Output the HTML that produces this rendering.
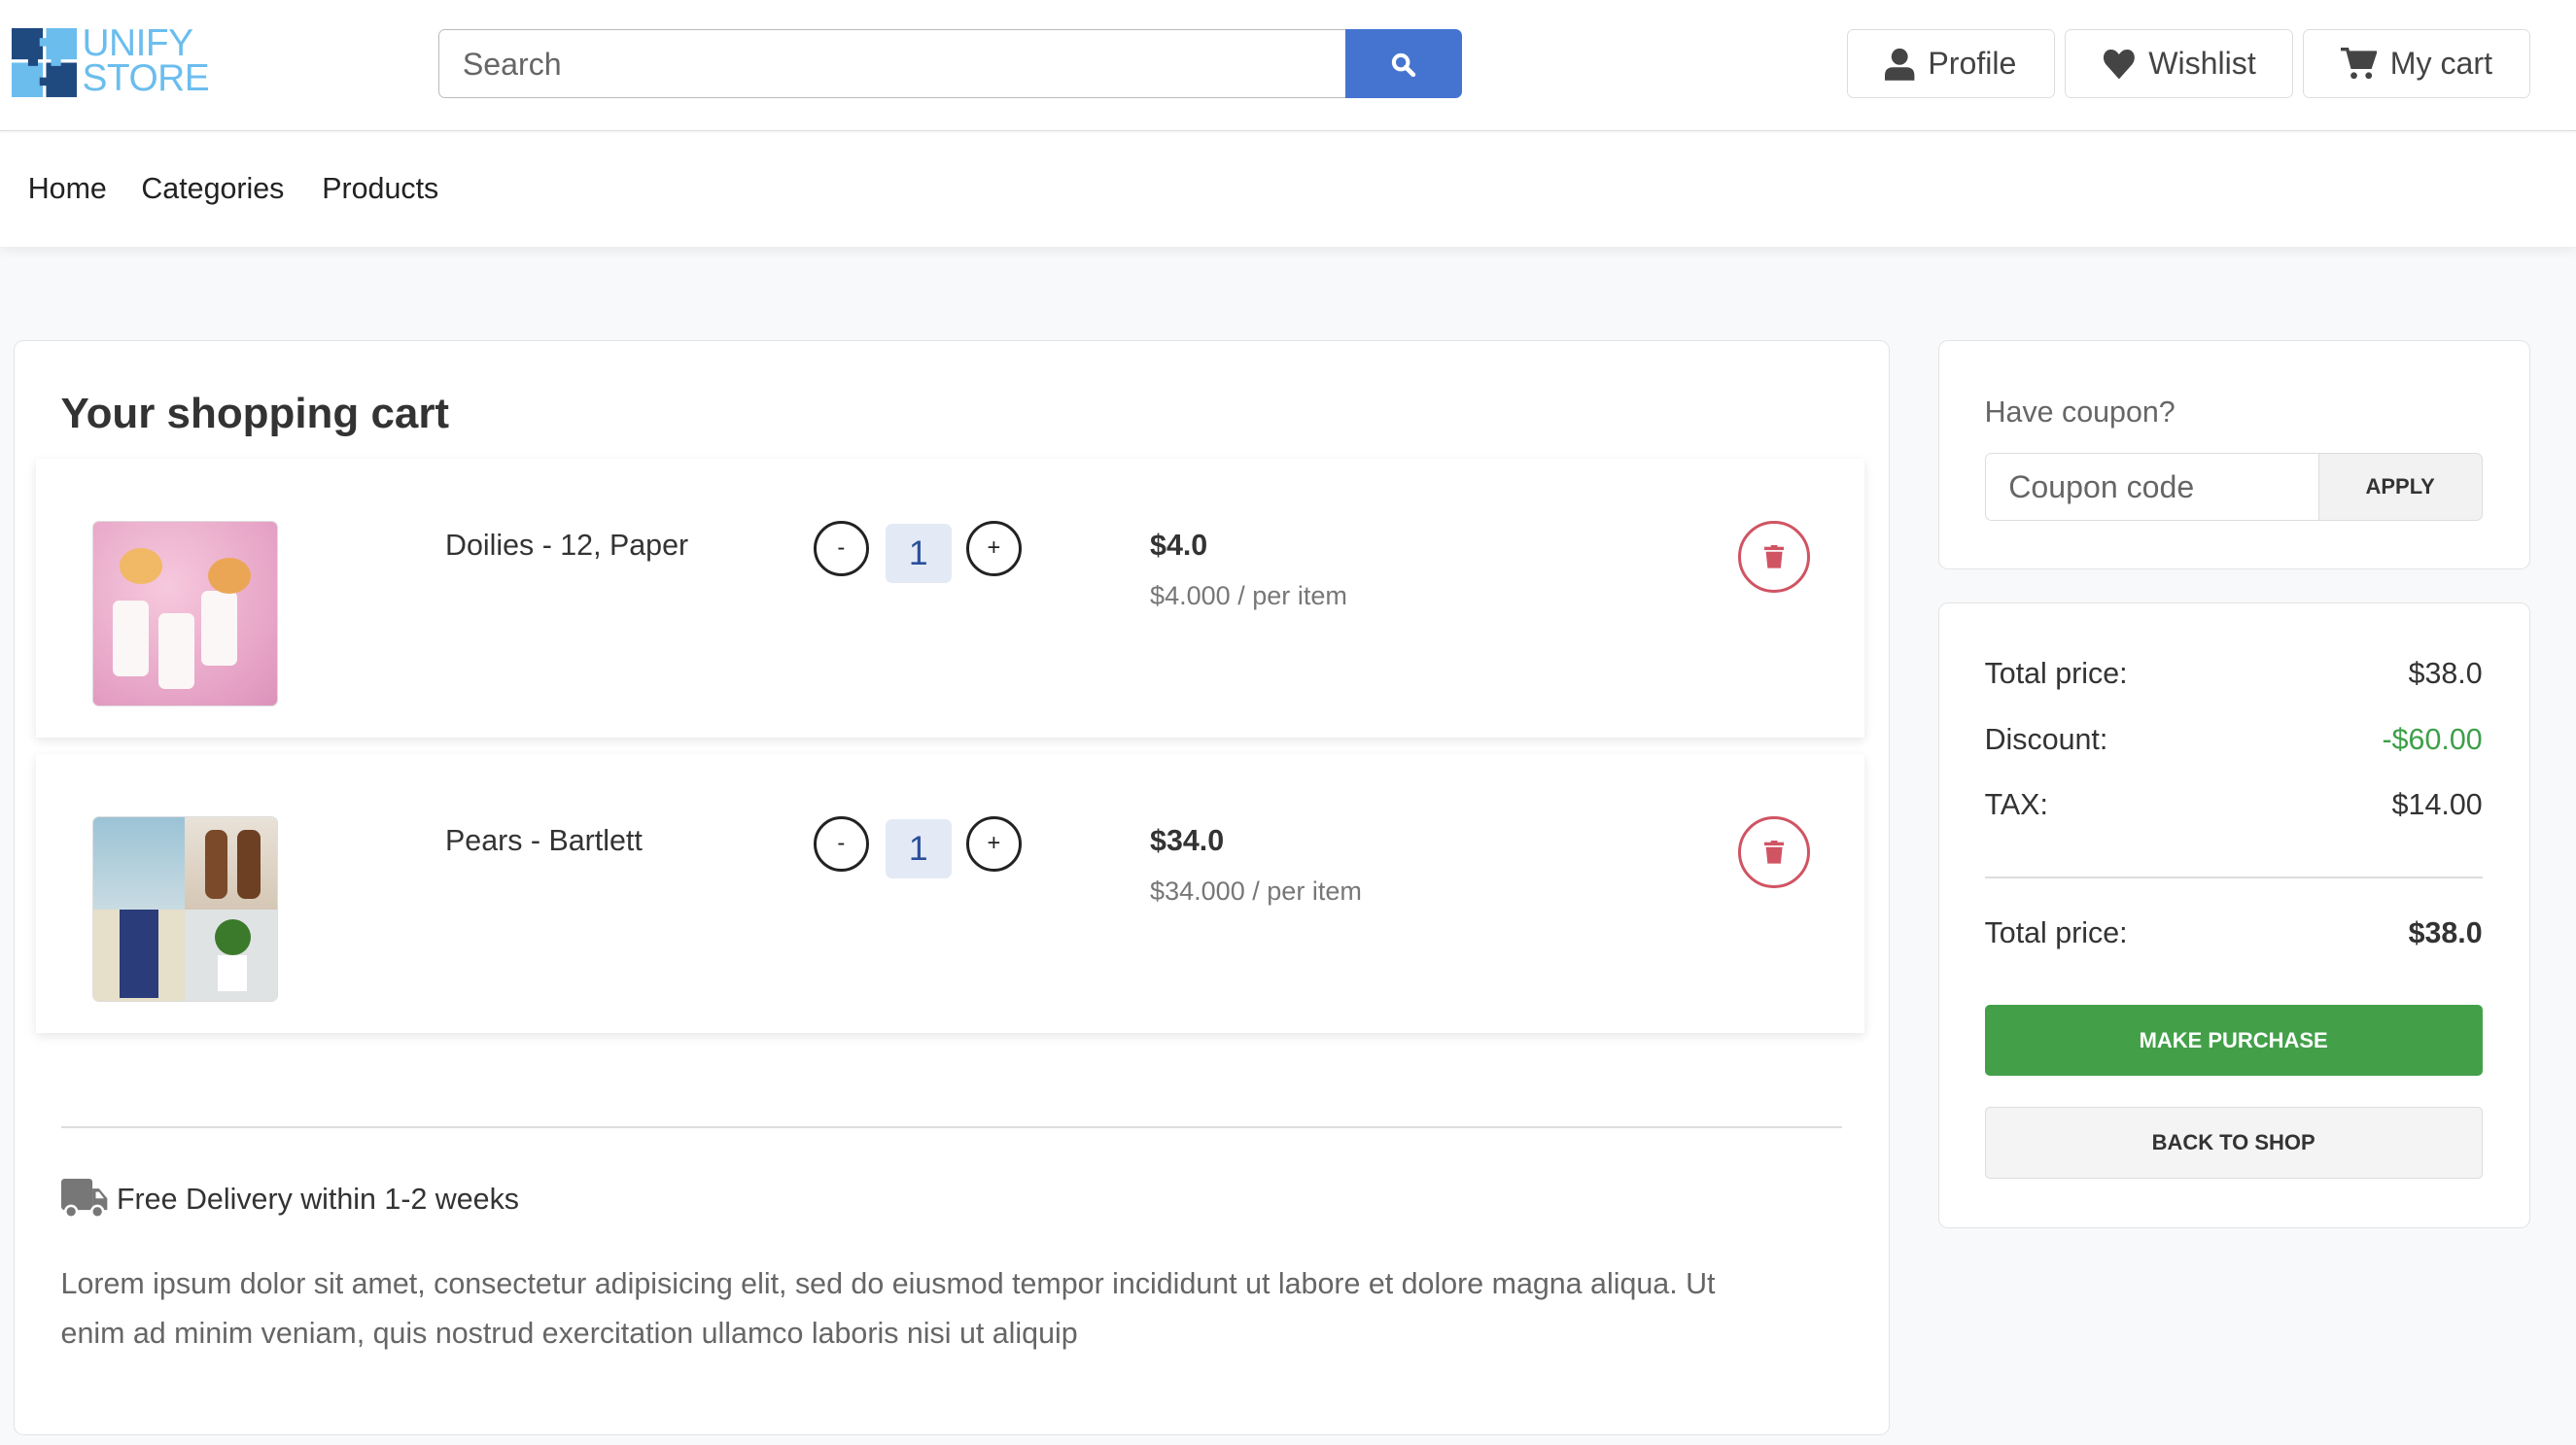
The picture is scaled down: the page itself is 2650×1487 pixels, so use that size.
<!DOCTYPE html>
<html><head><meta charset="utf-8"><style>
html{zoom:1.69005}
*{box-sizing:border-box;margin:0;padding:0}
body{width:1568px;height:880px;overflow:hidden;background:#f8f9fa;font-family:"Liberation Sans",sans-serif;color:#333;position:relative}
.a{position:absolute}
.hdr{left:0;top:0;width:1568px;height:80px;background:#fff;border-bottom:1px solid #dcdcdc}
.nav{left:0;top:81px;width:1568px;height:69px;background:#fff;box-shadow:0 3px 6px rgba(0,0,0,.06)}
.nav span{position:absolute;top:24px;font-size:18px;color:#222}
.btn{border:1px solid #ddd;border-radius:4px;background:#fff;height:42px;top:18px;font-size:19px;color:#444;display:flex;align-items:center;justify-content:center;gap:8px}
.card{background:#fff;border:1px solid #e3e3e3;border-radius:6px}
.row{left:22px;width:1113px;height:170px;background:#fff;box-shadow:0 2px 6px rgba(0,0,0,.1)}
.circ{width:34px;height:34px;border:2px solid #222;border-radius:50%;font-size:14px;display:flex;align-items:center;justify-content:center;color:#222}
.qty{width:40px;height:36px;background:#e3eaf6;border-radius:4px;color:#2b4f9a;font-size:21px;display:flex;align-items:center;justify-content:center}
.trash{width:44px;height:44px;border:2px solid #d05463;border-radius:50%;display:flex;align-items:center;justify-content:center}
.sm{font-size:18px;color:#333}
</style></head><body>
<div class="a hdr"></div>
<svg class="a" style="left:7px;top:17px" width="40" height="42" viewBox="0 0 40 42">
<rect x="0" y="0" width="19" height="19" fill="#1f4a80"/><rect x="21" y="0" width="19" height="19" fill="#6bbdee"/>
<rect x="0" y="21" width="19" height="21" fill="#6bbdee"/><rect x="21" y="21" width="19" height="21" fill="#1f4a80"/>
<rect x="17" y="6" width="6" height="5" fill="#6bbdee"/><rect x="10" y="17" width="6" height="6" fill="#1f4a80"/>
<rect x="24" y="17" width="6" height="6" fill="#6bbdee"/><rect x="17" y="30" width="6" height="5" fill="#1f4a80"/></svg>
<div class="a" style="left:50px;top:16px;font-size:23px;line-height:21px;color:#6bbdee;letter-spacing:-0.3px">UNIFY<br>STORE</div>
<div class="a" style="left:267px;top:18px;width:553px;height:42px;border:1px solid #bbb;border-right:0;border-radius:4px 0 0 4px;background:#fff;font-size:19px;color:#666;padding:10px 14px">Search</div>
<div class="a" style="left:819px;top:18px;width:71px;height:42px;background:#4574d0;border-radius:0 4px 4px 0"><svg style="position:absolute;left:28px;top:14px" width="15" height="15" viewBox="0 0 15 15"><circle cx="6" cy="6" r="4.3" fill="none" stroke="#fff" stroke-width="2.4"/><path d="M9 9l4.5 4.5" stroke="#fff" stroke-width="2.8" stroke-linecap="round"/></svg></div>
<div class="a btn" style="left:1124px;width:127px"><svg width="18" height="20" viewBox="0 0 18 20"><circle cx="9" cy="5.5" r="5" fill="#444"/><path d="M0 20v-3q0-5 5-5h8q5 0 5 5v3z" fill="#444"/></svg>Profile</div>
<div class="a btn" style="left:1257px;width:139px"><svg width="20" height="18" viewBox="0 0 20 18"><path d="M10 18L2 9C-1 5 1 0 5 0c2.5 0 4 1.5 5 3 1-1.5 2.5-3 5-3 4 0 6 5 3 9z" fill="#444"/></svg>Wishlist</div>
<div class="a btn" style="left:1402px;width:138px"><svg width="22" height="20" viewBox="0 0 22 20"><path d="M0 1h4l3 11h11l3-9H5" fill="none" stroke="#444" stroke-width="2"/><path d="M5 3h16l-3 9H7z" fill="#444"/><circle cx="8" cy="17" r="2" fill="#444"/><circle cx="17" cy="17" r="2" fill="#444"/></svg>My cart</div>
<div class="a nav"><span style="left:17px">Home</span><span style="left:86px">Categories</span><span style="left:196px">Products</span></div>

<div class="a card" style="left:8px;top:207px;width:1142px;height:667px"></div>
<div class="a" style="left:37px;top:237px;font-size:26px;font-weight:bold;color:#333">Your shopping cart</div>

<div class="a row" style="top:279px"></div>
<div class="a" style="left:56px;top:317px;width:113px;height:113px;border-radius:4px;border:1px solid #ddd;background:radial-gradient(circle at 40% 35%,#f6c9dd,#e6a3c6 70%,#dc92bb)">
<div class="a" style="left:12px;top:48px;width:22px;height:46px;background:#fbf7f6;border-radius:4px"></div>
<div class="a" style="left:40px;top:56px;width:22px;height:46px;background:#fbf7f6;border-radius:4px"></div>
<div class="a" style="left:66px;top:42px;width:22px;height:46px;background:#fbf7f6;border-radius:4px"></div>
<div class="a" style="left:16px;top:16px;width:26px;height:22px;background:#f1b865;border-radius:50%"></div>
<div class="a" style="left:70px;top:22px;width:26px;height:22px;background:#eba655;border-radius:50%"></div>
</div>
<div class="a sm" style="left:271px;top:322px">Doilies - 12, Paper</div>
<div class="a circ" style="left:495px;top:317px">-</div>
<div class="a qty" style="left:539px;top:319px">1</div>
<div class="a circ" style="left:588px;top:317px">+</div>
<div class="a" style="left:700px;top:322px;font-size:18px;font-weight:bold;color:#333">$4.0</div>
<div class="a" style="left:700px;top:354px;font-size:16px;color:#777">$4.000 / per item</div>
<div class="a trash" style="left:1058px;top:317px"><svg width="12" height="14" viewBox="0 0 12 14"><rect x="0" y="1" width="12" height="2" fill="#d05463"/><rect x="4" y="0" width="4" height="2" fill="#d05463"/><path d="M1 4h10l-1 10H2z" fill="#d05463"/></svg></div>

<div class="a row" style="top:459px"></div>
<div class="a" style="left:56px;top:497px;width:113px;height:113px;border-radius:4px;border:1px solid #ddd;overflow:hidden">
<div class="a" style="left:0;top:0;width:56px;height:56px;background:linear-gradient(#9bc3d6,#c9dbe2)"></div>
<div class="a" style="left:56px;top:0;width:57px;height:56px;background:linear-gradient(#e9e2d8,#d5c7b5)"><div class="a" style="left:12px;top:8px;width:14px;height:42px;background:#7a4a2a;border-radius:5px"></div><div class="a" style="left:32px;top:8px;width:14px;height:42px;background:#6d4024;border-radius:5px"></div></div>
<div class="a" style="left:0;top:56px;width:56px;height:57px;background:#e6dfc9"><div class="a" style="left:16px;top:0;width:24px;height:54px;background:#2a3c7a"></div></div>
<div class="a" style="left:56px;top:56px;width:57px;height:57px;background:#dfe3e4"><div class="a" style="left:18px;top:6px;width:22px;height:22px;background:#3b7a2a;border-radius:50%"></div><div class="a" style="left:20px;top:28px;width:18px;height:22px;background:#fff"></div></div>
</div>
<div class="a sm" style="left:271px;top:502px">Pears - Bartlett</div>
<div class="a circ" style="left:495px;top:497px">-</div>
<div class="a qty" style="left:539px;top:499px">1</div>
<div class="a circ" style="left:588px;top:497px">+</div>
<div class="a" style="left:700px;top:502px;font-size:18px;font-weight:bold;color:#333">$34.0</div>
<div class="a" style="left:700px;top:534px;font-size:16px;color:#777">$34.000 / per item</div>
<div class="a trash" style="left:1058px;top:497px"><svg width="12" height="14" viewBox="0 0 12 14"><rect x="0" y="1" width="12" height="2" fill="#d05463"/><rect x="4" y="0" width="4" height="2" fill="#d05463"/><path d="M1 4h10l-1 10H2z" fill="#d05463"/></svg></div>

<div class="a" style="left:37px;top:686px;width:1084px;height:1px;background:#ddd"></div>
<svg class="a" style="left:37px;top:718px" width="29" height="25" viewBox="0 0 29 25"><rect x="0" y="0" width="19" height="19" rx="2" fill="#777"/><path d="M19 6h4l5 6v7H19z" fill="#777"/><path d="M21 8h2l3 4h-5z" fill="#fff"/><circle cx="6" cy="20" r="3.5" fill="#777" stroke="#fff" stroke-width="1.5"/><circle cx="22" cy="20" r="3.5" fill="#777" stroke="#fff" stroke-width="1.5"/></svg>
<div class="a" style="left:71px;top:720px;font-size:18px;color:#333">Free Delivery within 1-2 weeks</div>
<div class="a" style="left:37px;top:767px;width:1090px;font-size:18px;line-height:30px;color:#666;white-space:nowrap">Lorem ipsum dolor sit amet, consectetur adipisicing elit, sed do eiusmod tempor incididunt ut labore et dolore magna aliqua. Ut<br>enim ad minim veniam, quis nostrud exercitation ullamco laboris nisi ut aliquip</div>

<div class="a card" style="left:1180px;top:207px;width:360px;height:140px"></div>
<div class="a" style="left:1208px;top:241px;font-size:18px;color:#666">Have coupon?</div>
<div class="a" style="left:1208px;top:276px;width:204px;height:41px;border:1px solid #ddd;border-radius:4px 0 0 4px;background:#fff;font-size:19px;color:#666;padding:9px 14px">Coupon code</div>
<div class="a" style="left:1411px;top:276px;width:100px;height:41px;border:1px solid #ddd;border-radius:0 4px 4px 0;background:#f2f2f2;font-size:13px;font-weight:bold;color:#333;display:flex;align-items:center;justify-content:center">APPLY</div>

<div class="a card" style="left:1180px;top:367px;width:360px;height:381px"></div>
<div class="a sm" style="left:1208px;top:400px">Total price:</div><div class="a sm" style="left:1380px;top:400px;width:131px;text-align:right">$38.0</div>
<div class="a sm" style="left:1208px;top:440px">Discount:</div><div class="a sm" style="left:1380px;top:440px;width:131px;text-align:right;color:#3da048">-$60.00</div>
<div class="a sm" style="left:1208px;top:480px">TAX:</div><div class="a sm" style="left:1380px;top:480px;width:131px;text-align:right">$14.00</div>
<div class="a" style="left:1208px;top:534px;width:303px;height:1px;background:#ddd"></div>
<div class="a sm" style="left:1208px;top:558px">Total price:</div><div class="a sm" style="left:1380px;top:558px;width:131px;text-align:right;font-weight:bold">$38.0</div>
<div class="a" style="left:1208px;top:612px;width:303px;height:43px;background:#43a049;border-radius:3px;color:#fff;font-size:13px;font-weight:bold;display:flex;align-items:center;justify-content:center">MAKE PURCHASE</div>
<div class="a" style="left:1208px;top:674px;width:303px;height:44px;background:#f4f4f4;border:1px solid #ddd;border-radius:3px;color:#333;font-size:13px;font-weight:bold;display:flex;align-items:center;justify-content:center">BACK TO SHOP</div>
</body></html>
